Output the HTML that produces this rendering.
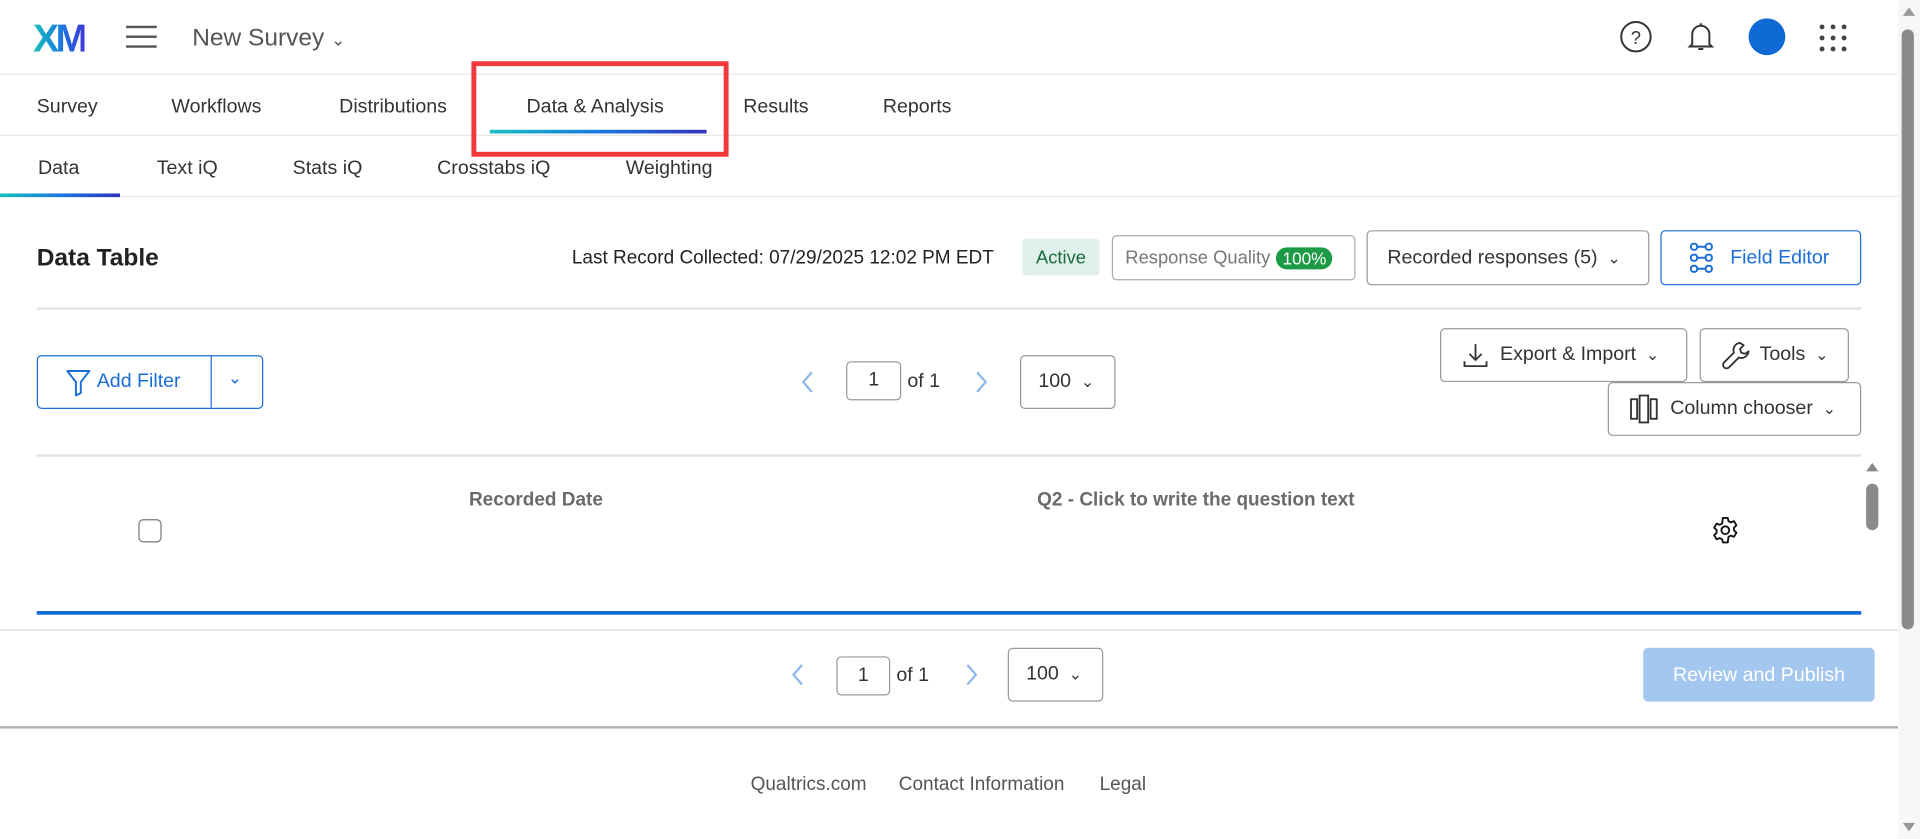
<!DOCTYPE html>
<html><head><meta charset="utf-8"><style>
*{box-sizing:border-box;margin:0;padding:0}
html,body{width:1920px;height:839px;overflow:hidden;background:#fff}
#w{position:absolute;left:0;top:0;width:1568px;height:685px;transform:scale(1.22449);transform-origin:0 0;font-family:"Liberation Sans",sans-serif;color:#333}
.a{position:absolute;white-space:nowrap}
.ln{position:absolute;background:#e6e6e6;height:1px}
.box{position:absolute;border:1px solid #999;border-radius:4px;background:#fff;display:flex;align-items:center;font-size:16px;color:#333}
.tab{font-size:16px;color:#333;top:79px}
.sub{font-size:16px;color:#333;top:129px}
</style></head><body><div id="w">
<!-- header -->
<div class="a" style="left:27px;top:13px;font-size:32px;font-weight:bold;letter-spacing:-3px;background:linear-gradient(90deg,#18c0b8,#1a7fe0 50%,#3a3ad8);-webkit-background-clip:text;color:transparent">XM</div>
<div class="a" style="left:103px;top:21px;width:25px;height:2px;background:#555;box-shadow:0 8px 0 #555,0 16px 0 #555"></div>
<div class="a" style="left:157px;top:20px;font-size:20px;color:#555">New Survey <span style="font-size:14px">&#8964;</span></div>
<svg class="a" style="left:1322px;top:16px" width="28" height="28" viewBox="0 0 28 28"><circle cx="14" cy="14" r="12" fill="none" stroke="#333" stroke-width="1.6"/><text x="14" y="20" font-size="15" text-anchor="middle" fill="#333" font-family="Liberation Sans">?</text></svg>
<svg class="a" style="left:1377px;top:16px" width="24" height="28" viewBox="0 0 24 28"><path d="M5 20V12a7 7 0 0 1 14 0v8l2 2H3z M10 24h4" fill="none" stroke="#333" stroke-width="1.6"/><path d="M12 3v2" stroke="#333" stroke-width="1.6"/></svg>
<div class="a" style="left:1428px;top:15px;width:30px;height:30px;border-radius:50%;background:#0f6ad6"></div>
<svg class="a" style="left:1485px;top:19px" width="24" height="24"><g fill="#444"><circle cx="3" cy="3" r="2"/><circle cx="12" cy="3" r="2"/><circle cx="21" cy="3" r="2"/><circle cx="3" cy="12" r="2"/><circle cx="12" cy="12" r="2"/><circle cx="21" cy="12" r="2"/><circle cx="3" cy="21" r="2"/><circle cx="12" cy="21" r="2"/><circle cx="21" cy="21" r="2"/></g></svg>
<div class="ln" style="left:0;top:60px;width:1550px"></div>
<!-- tabs -->
<div class="a tab" style="left:30px">Survey</div>
<div class="a tab" style="left:140px">Workflows</div>
<div class="a tab" style="left:277px">Distributions</div>
<div class="a tab" style="left:430px">Data &amp; Analysis</div>
<div class="a tab" style="left:607px">Results</div>
<div class="a tab" style="left:721px">Reports</div>
<div class="a" style="left:400px;top:106px;width:177px;height:3px;background:linear-gradient(90deg,#16c0c0,#1a78e0 50%,#3232c0)"></div>
<div class="ln" style="left:0;top:110px;width:1550px"></div>
<div class="a" style="left:385px;top:50px;width:210px;height:78px;border:4px solid #f2383c"></div>
<div class="a sub" style="left:31px">Data</div>
<div class="a sub" style="left:128px">Text iQ</div>
<div class="a sub" style="left:239px">Stats iQ</div>
<div class="a sub" style="left:357px">Crosstabs iQ</div>
<div class="a sub" style="left:511px">Weighting</div>
<div class="a" style="left:0;top:158px;width:98px;height:3px;background:linear-gradient(90deg,#16c0c0,#1a78e0 50%,#3232c0)"></div>
<div class="ln" style="left:98px;top:160px;width:1452px"></div>
<!-- data table header -->
<div class="a" style="left:30px;top:200px;font-size:20px;font-weight:bold;color:#222">Data Table</div>
<div class="a" style="left:467px;top:202px;font-size:15.5px;color:#222">Last Record Collected: 07/29/2025 12:02 PM EDT</div>
<div class="a" style="left:835px;top:195px;width:63px;height:30px;background:#dff1ea;border-radius:3px;color:#1a6b3f;font-size:15px;text-align:center;line-height:31px">Active</div>
<div class="box" style="left:908px;top:192px;width:199px;height:37px;border-color:#aaa;color:#777;font-size:15px;padding-left:10px">Response Quality <span style="margin-left:5px;background:#1d9a46;color:#fff;border-radius:9px;padding:1px 5px;font-size:14px">100%</span></div>
<div class="box" style="left:1116px;top:188px;width:231px;height:45px;padding-left:16px">Recorded responses (5) <span style="margin-left:8px;font-size:13px">&#8964;</span></div>
<div class="box" style="left:1356px;top:188px;width:164px;height:45px;border-color:#1a6ed8;color:#1a6ed8;padding-left:22px">
<svg width="26" height="30" viewBox="0 0 26 30" style="margin-right:8px"><g fill="none" stroke="#1a6ed8" stroke-width="1.6"><rect x="2" y="3" width="5" height="5" rx="2"/><rect x="14" y="3" width="5" height="5" rx="2"/><path d="M7 5.5h7"/><rect x="2" y="12" width="5" height="5" rx="2"/><rect x="14" y="12" width="5" height="5" rx="2"/><path d="M7 14.5h7"/><rect x="2" y="21" width="5" height="5" rx="2"/><rect x="14" y="21" width="5" height="5" rx="2"/><path d="M7 23.5h7"/></g></svg>Field Editor</div>
<div class="a" style="left:30px;top:251px;width:1490px;height:2px;background:#e4e4e4"></div>
<!-- filter row -->
<div class="box" style="left:30px;top:290px;width:185px;height:44px;border-color:#1a6ed8;color:#1a6ed8;padding-left:22px">
<svg width="22" height="24" viewBox="0 0 22 24" style="margin-right:4px"><path d="M2 3h18l-7 9v9l-4 2V12z" fill="none" stroke="#1a6ed8" stroke-width="1.6" stroke-linejoin="round"/></svg>Add Filter</div>
<div class="a" style="left:172px;top:291px;width:1px;height:42px;background:#1a6ed8"></div>
<div class="a" style="left:186px;top:300px;font-size:14px;color:#1a6ed8">&#8964;</div>
<svg class="a" style="left:652px;top:302px" width="14" height="20"><path d="M11 2L4 10l7 8" fill="none" stroke="#8ab8ea" stroke-width="1.8"/></svg>
<div class="box" style="left:691px;top:295px;width:45px;height:32px;justify-content:center">1</div>
<div class="a" style="left:741px;top:303px;font-size:16px">of 1</div>
<svg class="a" style="left:795px;top:302px" width="14" height="20"><path d="M3 2l7 8-7 8" fill="none" stroke="#8ab8ea" stroke-width="1.8"/></svg>
<div class="box" style="left:833px;top:290px;width:78px;height:44px;padding-left:14px">100 <span style="margin-left:8px;font-size:13px">&#8964;</span></div>
<div class="box" style="left:1176px;top:268px;width:202px;height:44px;padding-left:16px">
<svg width="24" height="24" viewBox="0 0 24 24" style="margin-right:8px"><path d="M12 3v13M7 11l5 5 5-5M3 17v4h18v-4" fill="none" stroke="#333" stroke-width="1.5"/></svg>Export &amp; Import <span style="margin-left:8px;font-size:13px">&#8964;</span></div>
<div class="box" style="left:1388px;top:268px;width:122px;height:44px;padding-left:16px">
<svg width="26" height="26" viewBox="0 0 26 26" style="margin-right:6px"><path d="M16 3a6 6 0 0 0-5 8L3 19a2.5 2.5 0 0 0 4 4l8-8a6 6 0 0 0 8-5l-3 2-3-1-1-3 3-3z" fill="none" stroke="#333" stroke-width="1.5" stroke-linejoin="round"/></svg>Tools <span style="margin-left:8px;font-size:13px">&#8964;</span></div>
<div class="box" style="left:1313px;top:312px;width:207px;height:44px;padding-left:16px">
<svg width="26" height="26" viewBox="0 0 26 26" style="margin-right:8px"><g fill="none" stroke="#333" stroke-width="1.5"><rect x="2" y="5" width="5" height="16"/><rect x="9" y="2" width="7" height="22"/><rect x="18" y="5" width="5" height="16"/></g></svg>Column chooser <span style="margin-left:8px;font-size:13px">&#8964;</span></div>
<div class="a" style="left:30px;top:371px;width:1490px;height:2px;background:#e4e4e4"></div>
<!-- table -->
<div class="a" style="left:113px;top:424px;width:19px;height:19px;border:1px solid #777;border-radius:4px"></div>
<div class="a" style="left:383px;top:400px;font-size:15.5px;font-weight:bold;color:#6a6a6a">Recorded Date</div>
<div class="a" style="left:847px;top:400px;font-size:15.5px;font-weight:bold;color:#6a6a6a">Q2 - Click to write the question text</div>
<svg class="a" style="left:1397px;top:421px" width="24" height="24" viewBox="0 0 24 24"><path d="M10 2h4l.6 2.6 2 1 2.5-1 2 3.4-2 1.8v2.4l2 1.8-2 3.4-2.5-1-2 1L14 22h-4l-.6-2.6-2-1-2.5 1-2-3.4 2-1.8v-2.4l-2-1.8 2-3.4 2.5 1 2-1z" fill="none" stroke="#111" stroke-width="1.5" stroke-linejoin="round"/><circle cx="12" cy="12" r="3.2" fill="none" stroke="#111" stroke-width="1.5"/></svg>
<div class="a" style="left:1524px;top:378px;width:0;height:0;border-left:5px solid transparent;border-right:5px solid transparent;border-bottom:7px solid #888"></div>
<div class="a" style="left:1524px;top:395px;width:10px;height:38px;border-radius:5px;background:#8a8a8a"></div>
<div class="a" style="left:30px;top:499px;width:1490px;height:3px;background:#0b6bd3"></div>
<div class="a" style="left:0;top:514px;width:1550px;height:1px;background:#ddd"></div>
<!-- bottom pager -->
<svg class="a" style="left:644px;top:541px" width="14" height="20"><path d="M11 2L4 10l7 8" fill="none" stroke="#8ab8ea" stroke-width="1.8"/></svg>
<div class="box" style="left:683px;top:536px;width:44px;height:32px;justify-content:center">1</div>
<div class="a" style="left:732px;top:543px;font-size:16px">of 1</div>
<svg class="a" style="left:787px;top:541px" width="14" height="20"><path d="M3 2l7 8-7 8" fill="none" stroke="#8ab8ea" stroke-width="1.8"/></svg>
<div class="box" style="left:823px;top:529px;width:78px;height:44px;padding-left:14px">100 <span style="margin-left:8px;font-size:13px">&#8964;</span></div>
<div class="a" style="left:1342px;top:529px;width:189px;height:44px;background:#a3c7ee;border-radius:4px;color:#fff;font-size:16px;text-align:center;line-height:46px">Review and Publish</div>
<div class="a" style="left:0;top:593px;width:1550px;height:2px;background:#b0b0b0"></div>
<div class="a" style="left:613px;top:632px;font-size:15.5px;color:#555">Qualtrics.com</div>
<div class="a" style="left:734px;top:632px;font-size:15.5px;color:#555">Contact Information</div>
<div class="a" style="left:898px;top:632px;font-size:15.5px;color:#555">Legal</div>
<!-- page scrollbar -->
<div class="a" style="left:1550px;top:0;width:18px;height:685px;background:#f7f7f7"></div>
<div class="a" style="left:1554px;top:6px;width:0;height:0;border-left:5px solid transparent;border-right:5px solid transparent;border-bottom:7px solid #999"></div>
<div class="a" style="left:1553px;top:24px;width:10px;height:490px;border-radius:5px;background:#8a8a8a"></div>
<div class="a" style="left:1554px;top:672px;width:0;height:0;border-left:5px solid transparent;border-right:5px solid transparent;border-top:7px solid #999"></div>
</div></body></html>
